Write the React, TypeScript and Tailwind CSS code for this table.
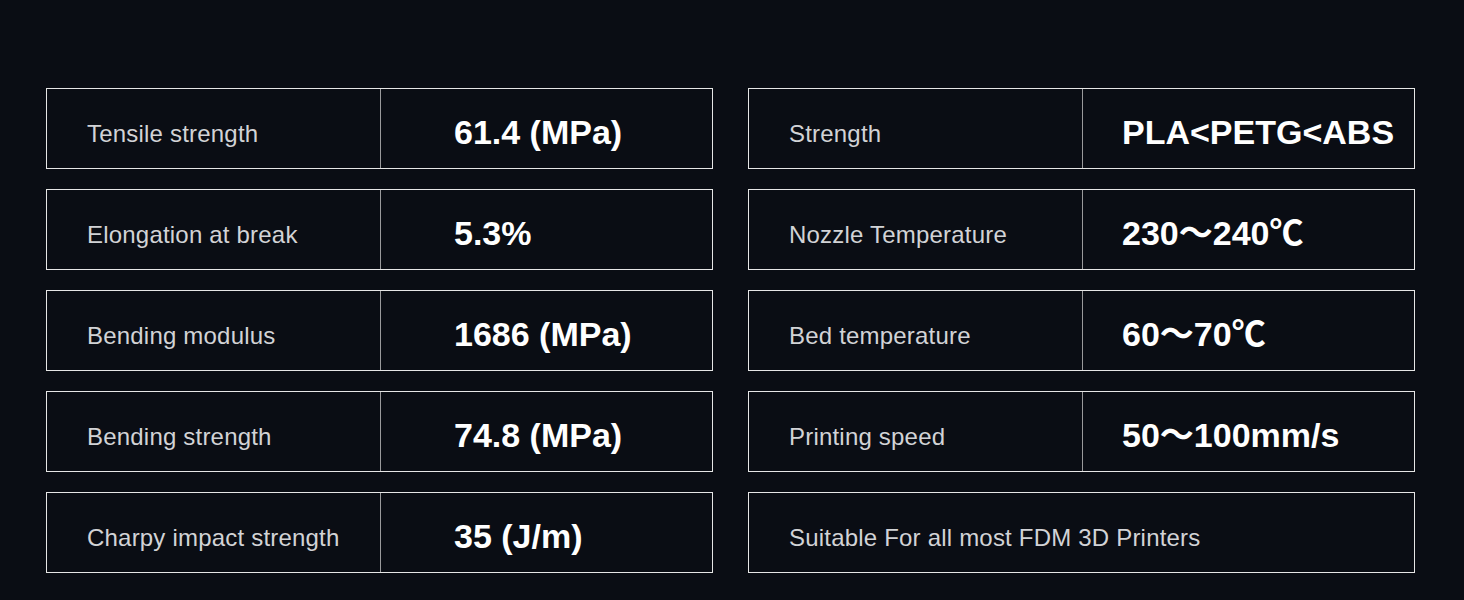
import React from "react";

type Row = { label: string; value?: string };

const left: Row[] = [
  { label: "Tensile strength", value: "61.4 (MPa)" },
  { label: "Elongation at break", value: "5.3%" },
  { label: "Bending modulus", value: "1686 (MPa)" },
  { label: "Bending strength", value: "74.8 (MPa)" },
  { label: "Charpy impact strength", value: "35 (J/m)" },
];

const right: Row[] = [
  { label: "Strength", value: "PLA<PETG<ABS" },
  { label: "Nozzle Temperature", value: "230～240℃" },
  { label: "Bed temperature", value: "60～70℃" },
  { label: "Printing speed", value: "50～100mm/s" },
  { label: "Suitable For all most FDM 3D Printers" },
];

function SpecRow({ row, valuePad }: { row: Row; valuePad: string }) {
  return (
    <div className="flex h-[81px] border border-[#e6e6e6]">
      <div className={`${row.value ? "w-[333px] shrink-0" : "flex-1"} flex items-center pl-[40px] pt-[11px] text-[24px] text-[#d2d3d6] tracking-[0.2px]`}>
        {row.label}
      </div>
      {row.value && (
        <div className={`flex-1 flex items-center border-l border-[#9a9a9c] ${valuePad} pt-[8px] text-[34px] font-bold text-white`}>
          {row.value}
        </div>
      )}
    </div>
  );
}

export default function App() {
  return (
    <div
      className="w-[1464px] h-[600px] bg-[#0a0d14] pt-[88px] pl-[46px]"
      style={{ fontFamily: '"Liberation Sans", Arial, "Noto Sans CJK SC", sans-serif' }}
    >
      <div className="flex gap-[35px]">
        <div className="w-[667px] flex flex-col gap-[20px]">
          {left.map((r) => (
            <SpecRow key={r.label} row={r} valuePad="pl-[73px]" />
          ))}
        </div>
        <div className="w-[667px] flex flex-col gap-[20px]">
          {right.map((r) => (
            <SpecRow key={r.label} row={r} valuePad="pl-[39px]" />
          ))}
        </div>
      </div>
    </div>
  );
}
